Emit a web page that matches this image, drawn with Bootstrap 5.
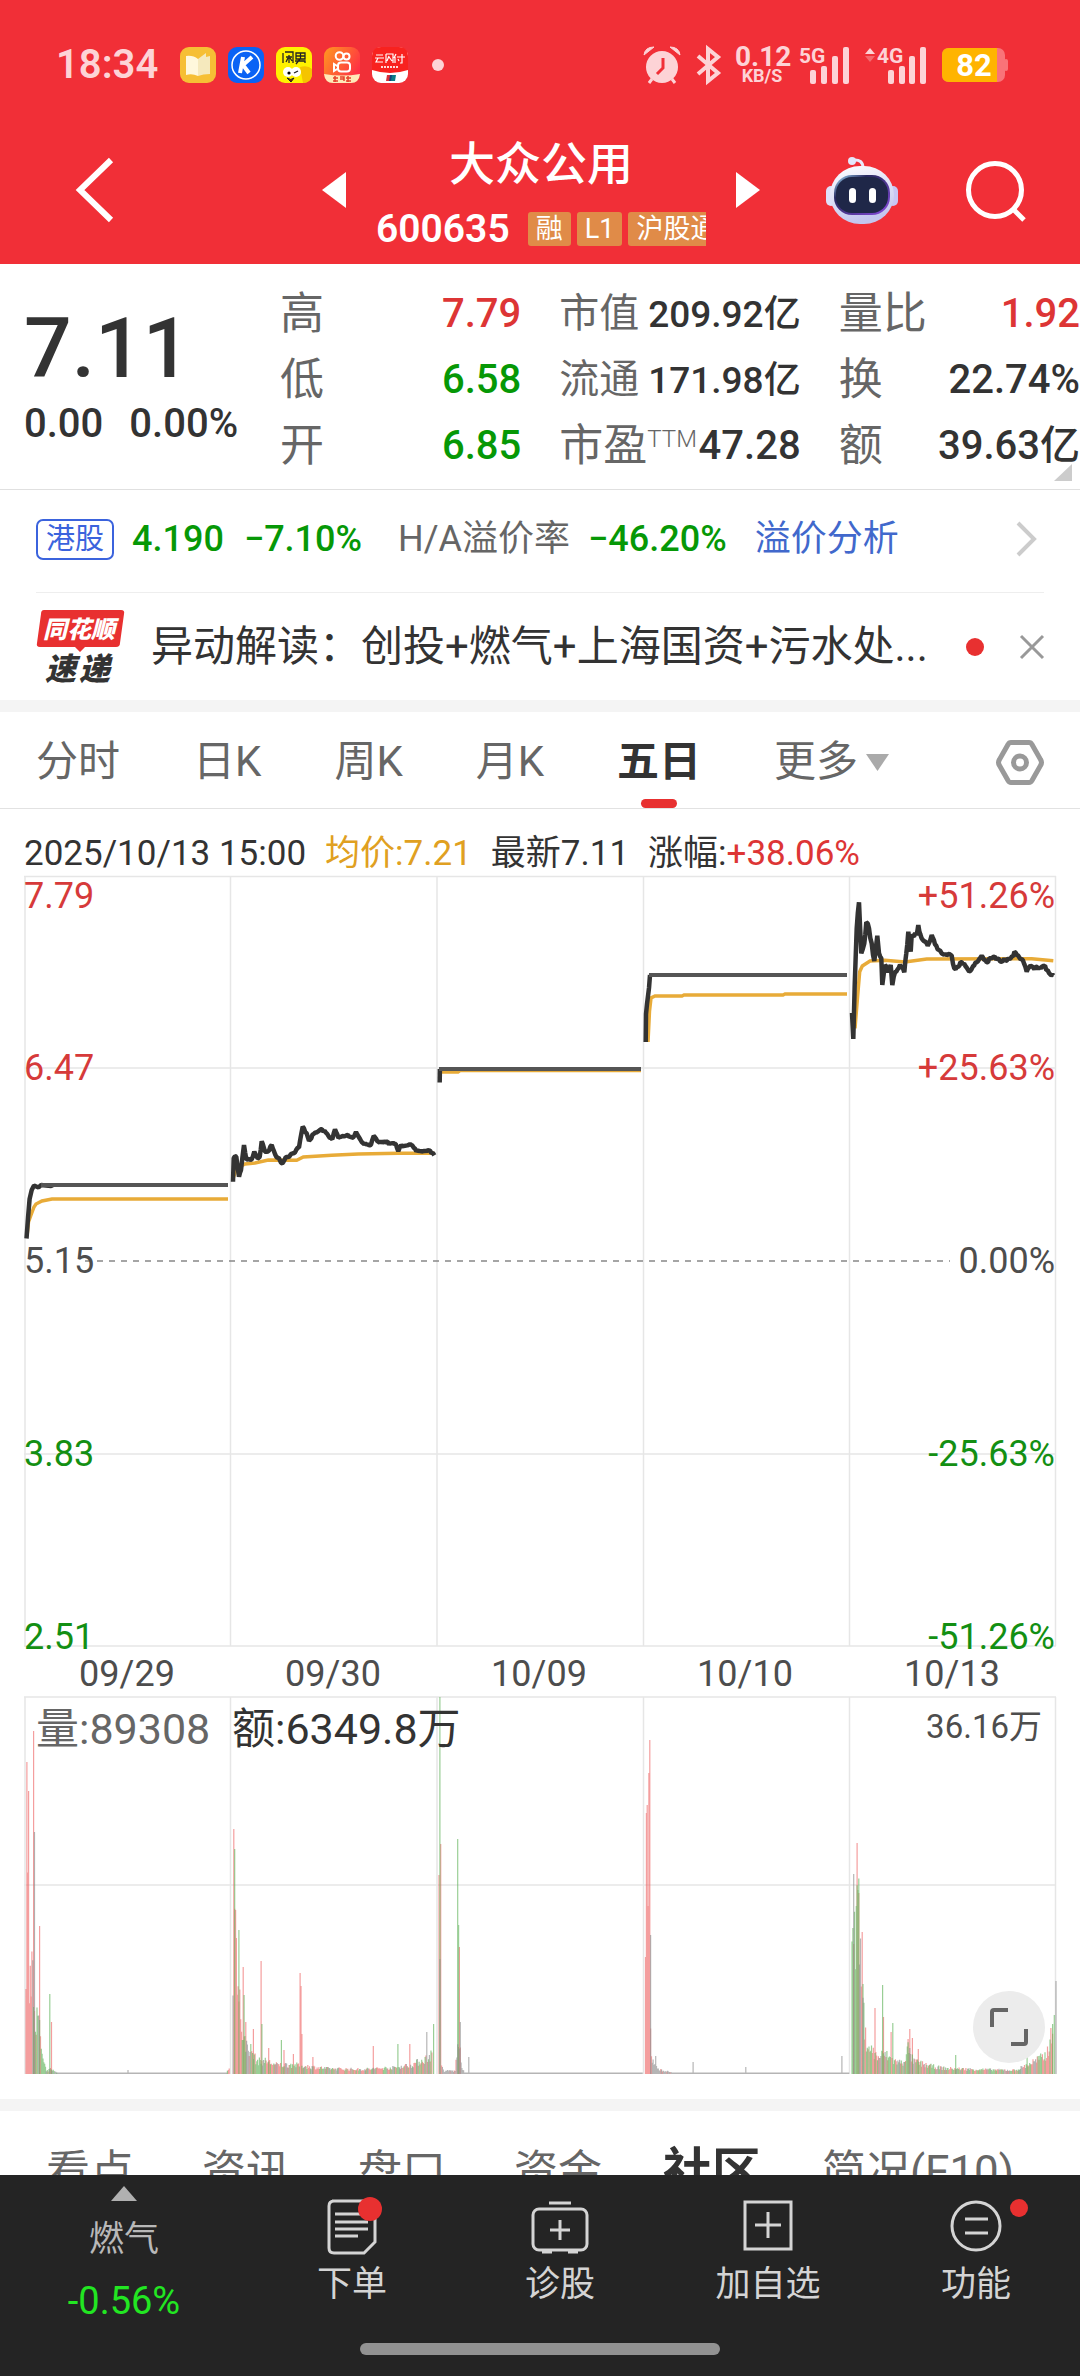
<!DOCTYPE html>
<html lang="zh-CN">
<head>
<meta charset="utf-8">
<meta name="viewport" content="width=device-width, initial-scale=1">
<title>大众公用 600635</title>
<link rel="stylesheet" href="https://cdn.jsdelivr.net/npm/bootstrap@5.3.0/dist/css/bootstrap.min.css">
<script src="https://cdn.jsdelivr.net/npm/bootstrap@5.3.0/dist/js/bootstrap.bundle.min.js"></script>
<style>
  :root { --up: #dd3535; --down: #069806; --brand: #f12f37; --ink: #333; --soft: #666; --pale: #fdd3d6; }
  body { font-family: Roboto, "Noto Sans CJK SC", sans-serif; color: var(--ink); background: #fff; line-height: 1; overflow-x: hidden; }
  a { text-decoration: none; color: inherit; }
  button { border: 0; background: none; padding: 0; color: inherit; line-height: 1; }
  svg { display: block; flex: none; overflow: visible; }
  .up { color: var(--up); } .down { color: var(--down); } .soft { color: var(--soft); }

  .top-area { background: var(--brand); color: #fff; }
  .status { height: 130px; padding: 0 72px 0 56px; color: var(--pale); }
  .clock { font-size: 40px; font-weight: 600; width: 124px; }
  .apps { gap: 12px; }
  .signals { gap: 14px; }
  .rate { font-size: 28px; line-height: 22px; font-weight: 700; width: 54px; }
  .rate-unit { font-size: 18px; line-height: 16px; font-weight: 700; }
  .title-bar { padding: 0 54px 14px 76px; height: 134px; }
  .switcher { gap: 30px; }
  .stock-name { font-size: 46px; line-height: 68px; font-weight: 500; }
  .stock-col { width: 330px; height: 120px; overflow: hidden; }
  .code-row { margin-top: 13px; gap: 6px; }
  .code { font-size: 39px; line-height: 36px; font-weight: 600; margin-right: 12px; }
  .tag { background: #e08b48; font-size: 27px; line-height: 34px; padding: 0 8px; border-radius: 3px; white-space: nowrap; }
  .tools { gap: 68px; margin-left: 66px; }

  .quote { padding: 17px 0 10px 24px; border-bottom: 1px solid #e0e0e0; position: relative; }
  .price-col { width: 256px; padding-top: 20px; }
  .price { font-size: 84px; line-height: 96px; font-weight: 500; }
  .change { font-size: 40px; line-height: 54px; gap: 26px; font-weight: 500; }
  .facts { flex: 1; gap: 38px; }
  .fact { height: 66px; font-size: 44px; white-space: nowrap; }
  .fact dt { font-weight: 400; color: var(--soft); }
  .fact dd { font-size: 40px; font-weight: 500; margin: 0; }
  .fact.tight dt { font-size: 40px; } .fact.tight dd { font-size: 37px; }
  .ttm { font-size: 24px; top: -14px; font-weight: 300; }
  .fold { position: absolute; right: 8px; bottom: 8px; }

  .hk { height: 102px; padding: 0 44px 4px 36px; font-size: 36px; }
  .hk-tag { font-size: 29px; line-height: 37px; border: 2px solid #3b63dd; color: #3b63dd; border-radius: 7px; padding: 0 8px; margin-right: 18px; }
  .hk b { font-weight: 500; }
  .hk-gap { margin-left: 36px; }
  .hk-lab { margin-right: 18px; }
  .link-blue { color: #4168cc; margin-left: 28px; }
  .news { margin: 0 36px; border-top: 1px solid #eee; height: 108px; }
  .flash { width: 89px; margin-right: 26px; }
  .news-text { font-size: 42px; line-height: 60px; }
  .news button { margin-left: 36px; flex: none; }
  .dot { display: block; flex: none; width: 18px; height: 18px; border-radius: 50%; background: #e83030; }
  .band { height: 12px; background: #f4f4f4; }

  .periods { height: 97px; padding: 4px 36px 0; gap: 73px; border-bottom: 1px solid #e2e2e2; font-size: 42px; color: var(--soft); }
  .periods a { position: relative; line-height: 92px; white-space: nowrap; }
  .periods .on { color: var(--ink); font-weight: 700; }
  .periods .on::after { content: ""; position: absolute; left: 24px; right: 24px; bottom: 0; height: 9px; border-radius: 5px; background: #e83030; }
  .readout { padding: 24px 24px 0; font-size: 35px; line-height: 41px; gap: 19px; }
  .avg { color: #e0a021; }

  .chart-box { margin-bottom: 23px; }
  .chart-box svg.plot { width: 100%; height: auto; }
  .plot text { font-family: Roboto, "Noto Sans CJK SC", sans-serif; font-size: 36px; }
  .plot .vol-text { font-size: 43px; }
  .plot .vol-max { font-size: 33px; }
  .expand { position: absolute; right: 35px; bottom: 13px; width: 72px; height: 72px; border-radius: 50%; background: #ececec; }

  .sections { padding: 28px 12px 0; font-size: 44px; line-height: 66px; color: var(--soft); overflow: hidden; }
  .sections a { padding: 0 34px; white-space: nowrap; }
  .sections .on { font-size: 49px; font-weight: 700; color: var(--ink); padding: 0 27px; }

  .dock { background: #242424; color: #d4d4d4; height: 201px; font-size: 35px; }
  .dock a { flex: 1; }
  .dock .sector { flex: 0 0 248px; color: #b8b8b8; padding-top: 11px; line-height: 44px; }
  .sector-name { margin-top: 17px; }
  .sector-rate { margin-top: 17px; color: #22e622; font-size: 38px; }
  .dock-icon { height: 52px; margin-top: 24px; position: relative; }
  .dock-label { line-height: 44px; margin-top: 12px; }
  .alert-dot { position: absolute; width: 24px; height: 24px; border-radius: 50%; background: #e83030; top: -2px; right: -5px; }
  .alert-dot.far { width: 18px; height: 18px; top: 0; right: -26px; }
  .home-bar { position: absolute; left: 33.33%; right: 33.33%; bottom: 21px; height: 12px; border-radius: 6px; background: #929292; }
</style>
</head>
<body>
<header class="top-area">
  <div class="status d-flex align-items-center">
    <span class="clock">18:34</span>
    <div class="apps d-flex">
      <svg width="36" height="36" viewBox="0 0 36 36"><rect width="36" height="36" rx="9" fill="#f6bf35"/><path d="M6 9q7-1 12 3v17q-6-3-12-1z" fill="#fff8dc"/><path d="M18 12l8-6v4l4-1v18q-7 0-12 2z" fill="#f5e9bd"/></svg>
      <svg width="36" height="36" viewBox="0 0 36 36"><rect width="36" height="36" rx="9" fill="#0a62f5"/><circle cx="18" cy="18" r="14" fill="none" stroke="#fff" stroke-width="1.5"/><path d="M15 10l-3 16M24 10l-9 8 6 8" fill="none" stroke="#fff" stroke-width="4"/></svg>
      <svg width="36" height="36" viewBox="0 0 36 36"><rect width="36" height="36" rx="9" fill="#fff100"/><path d="M24 20q8-2 12 2v6q-1 8-9 8z" fill="#f5c400"/><path d="M7 6v10M9 5h8v11M13 8v8M10 10h6M12 11l-2 4M14 11l2 3M20 6h9v6h-9zM20 9h9M24.500 6v6M19 14h10v2M24 12l-4 5" stroke="#222" stroke-width="1.300" fill="none"/><circle cx="12" cy="25" r="5" fill="#fff"/><circle cx="20" cy="25" r="5" fill="#fff"/><circle cx="13" cy="26" r="1.600"/><path d="M18 26l4-2" stroke="#222" stroke-width="1.300"/><path d="M11 31q4 3 7 0l-3 4z" stroke="#222" fill="#711" stroke-width="1"/></svg>
      <svg width="36" height="36" viewBox="0 0 36 36"><defs><linearGradient id="ks" x2="1" y2=".6"><stop stop-color="#ff9a1f"/><stop offset="1" stop-color="#ff2f45"/></linearGradient></defs><rect width="36" height="36" rx="9" fill="url(#ks)"/><g fill="none" stroke="#fff" stroke-width="2"><circle cx="15.500" cy="9" r="3.800"/><circle cx="22.500" cy="9.500" r="3"/><rect x="14" y="15.500" width="12" height="9" rx="3"/><path d="M10 17v7l4-2.500v-2z"/></g><path d="M0 27q18 3 36 0-1 9-9 9H9q-8 0-9-9z" fill="#ffe9b8"/><path d="M9 34h5M9 31h5M11 29v6M16 30h4v4M16 32h4M22 31h5M22 34h5M24 29v6" stroke="#e6402a" stroke-width="1.500" fill="none"/></svg>
      <svg width="36" height="36" viewBox="0 0 36 36"><rect width="36" height="36" rx="9" fill="#fff"/><path d="M0 23V9q0-9 9-9h18q9 0 9 9v14q-18 6-36 0z" fill="#f8221f"/><path d="M4 8h7M3 11h9M6 11l-2 4h7M14 7v9M14 7h7v9M17 9l-2 5M17 10l3 4M24 7l-2 4M23 10v6M25 10h8M30 7v9h-2M26 12l1 2" stroke="#fff" stroke-width="1.200" fill="none"/><path d="M9 20h18" stroke="#ffd9d9" stroke-width="2" stroke-dasharray="2 1"/><path d="M15 28h4l-1 6h-4z" fill="#d8303a"/><path d="M18 28h3l-1 6h-3z" fill="#14407a"/><path d="M20 28h4l-1 6h-4z" fill="#0b7c86"/></svg>
    </div>
    <svg class="ms-4" width="12" height="12" viewBox="0 0 12 12"><circle cx="6" cy="6" r="6" fill="#fdd3d6"/></svg>
    <div class="signals d-flex align-items-center ms-auto">
      <svg width="38" height="38" viewBox="0 0 38 38" fill="#fdd3d6"><circle cx="19" cy="21" r="16"/><path d="M1 9q1-8 10-8zM37 9q-1-8-10-8z" stroke="#fdd3d6" stroke-width="1"/><path d="M9 33l-3 4M29 33l3 4" stroke="#fdd3d6" stroke-width="3"/><path d="M20 12v10l-6 6" fill="none" stroke="#f12f37" stroke-width="3"/></svg>
      <svg width="26" height="38" viewBox="0 0 26 38"><path d="M3 10l20 17-10 8V3l10 8L3 28" fill="none" stroke="#fdd3d6" stroke-width="4"/></svg>
      <div class="rate text-center">0.12<div class="rate-unit">KB/S</div></div>
      <svg width="48" height="37" viewBox="0 0 48 37" fill="#fdd3d6"><text x="-4" y="16" font-size="21" font-weight="700">5G</text><rect x="7" y="23" width="6" height="14" rx="2"/><rect x="18" y="19" width="6" height="18" rx="2"/><rect x="29" y="9" width="6" height="28" rx="2"/><rect x="40" y="0" width="6" height="37" rx="2"/></svg>
      <svg width="63" height="37" viewBox="0 0 63 37" fill="#fdd3d6"><path d="M0 7l5-6 5 6z"/><path d="M0 9l5 6 5-6z" opacity=".35"/><text x="12" y="16" font-size="21" font-weight="700">4G</text><rect x="23" y="23" width="6" height="14" rx="2"/><rect x="34" y="19" width="6" height="18" rx="2"/><rect x="44" y="9" width="6" height="28" rx="2"/><rect x="55" y="0" width="6" height="37" rx="2"/></svg>
      <svg width="66" height="34" viewBox="0 0 66 34"><rect width="63" height="34" rx="7" fill="#f97378"/><rect x="62" y="11" width="4" height="12" rx="2" fill="#f97378"/><path d="M7 0h48v34H7q-7 0-7-7V7q0-7 7-7z" fill="#ffb400"/><text x="32" y="28" text-anchor="middle" font-size="31" font-weight="700" fill="#fff">82</text></svg>
    </div>
  </div>
  <div class="title-bar d-flex align-items-center">
    <button aria-label="返回"><svg width="37" height="66" viewBox="0 0 37 66"><path d="M35 3L4 33l31 30" fill="none" stroke="#fff" stroke-width="6"/></svg></button>
    <div class="switcher d-flex align-items-center ms-auto">
      <button aria-label="上一只"><svg width="24" height="36" viewBox="0 0 24 36"><path d="M24 0v36L0 18z" fill="#fff"/></svg></button>
      <div class="stock-col">
        <div class="stock-name text-center">大众公用</div>
        <div class="code-row d-flex align-items-center"><span class="code">600635</span><span class="tag">融</span><span class="tag">L1</span><span class="tag">沪股通</span></div>
      </div>
      <button aria-label="下一只"><svg width="24" height="36" viewBox="0 0 24 36"><path d="M0 0v36l24-18z" fill="#fff"/></svg></button>
    </div>
    <div class="tools d-flex align-items-center">
      <button aria-label="智能助手"><svg width="72" height="68" viewBox="0 0 72 68"><defs><linearGradient id="hd" x2=".3" y2="1"><stop stop-color="#fff"/><stop offset="1" stop-color="#c3c6ee"/></linearGradient><linearGradient id="vs" x2="1" y2="1"><stop stop-color="#a9e4ff"/><stop offset=".3" stop-color="#27285e"/><stop offset="1" stop-color="#8a4be0"/></linearGradient></defs><path d="M27 4q10-1 10 8" fill="none" stroke="#e9e9fb" stroke-width="3"/><circle cx="26" cy="5" r="4" fill="#e4e6fa"/><rect x="0" y="30" width="10" height="20" rx="5" fill="#dfe0fa"/><rect x="62" y="30" width="10" height="20" rx="5" fill="#c8c6f4"/><rect x="4" y="10" width="64" height="58" rx="30" fill="url(#hd)"/><rect x="8" y="19" width="56" height="40" rx="18" fill="url(#vs)"/><rect x="10" y="21" width="52" height="36" rx="16" fill="#1f2748"/><rect x="23" y="32" width="7" height="15" rx="3.500" fill="#fff"/><rect x="43" y="32" width="7" height="15" rx="3.500" fill="#fff"/></svg></button>
      <button aria-label="搜索"><svg width="60" height="60" viewBox="0 0 60 60" fill="none" stroke="#fff" stroke-width="5"><circle cx="29" cy="30" r="26.500"/><path d="M47 49l11 11"/></svg></button>
    </div>
  </div>
</header>

<main>
  <section class="quote d-flex">
    <div class="price-col">
      <div class="price">7.11</div>
      <div class="change d-flex"><span>0.00</span><span>0.00%</span></div>
    </div>
    <div class="facts d-flex">
      <dl class="m-0 flex-fill w-100">
        <div class="fact d-flex align-items-center justify-content-between"><dt>高</dt><dd class="up">7.79</dd></div>
        <div class="fact d-flex align-items-center justify-content-between"><dt>低</dt><dd class="down">6.58</dd></div>
        <div class="fact d-flex align-items-center justify-content-between"><dt>开</dt><dd class="down">6.85</dd></div>
      </dl>
      <dl class="m-0 flex-fill w-100">
        <div class="fact tight d-flex align-items-center justify-content-between"><dt>市值</dt><dd>209.92亿</dd></div>
        <div class="fact tight d-flex align-items-center justify-content-between"><dt>流通</dt><dd>171.98亿</dd></div>
        <div class="fact d-flex align-items-center justify-content-between"><dt>市盈<span class="ttm position-relative">TTM</span></dt><dd>47.28</dd></div>
      </dl>
      <dl class="m-0 flex-fill w-100">
        <div class="fact d-flex align-items-center justify-content-between"><dt>量比</dt><dd class="up">1.92</dd></div>
        <div class="fact d-flex align-items-center justify-content-between"><dt>换</dt><dd>22.74%</dd></div>
        <div class="fact d-flex align-items-center justify-content-between"><dt>额</dt><dd>39.63亿</dd></div>
      </dl>
    </div>
    <svg class="fold" width="18" height="17" viewBox="0 0 18 17"><path d="M18 0v17H0z" fill="#ccc"/></svg>
  </section>

  <section class="hk d-flex align-items-center">
    <span class="hk-tag">港股</span>
    <b class="down me-3 pe-1">4.190</b>
    <b class="down">−7.10%</b>
    <span class="soft hk-gap hk-lab">H/A溢价率</span>
    <b class="down">−46.20%</b>
    <a href="#" class="link-blue">溢价分析</a>
    <svg class="ms-auto" width="20" height="36" viewBox="0 0 20 36"><path d="M2 2l16 16L2 34" fill="none" stroke="#ccc" stroke-width="4"/></svg>
  </section>

  <section class="news d-flex align-items-center">
    <svg class="flash" height="76" viewBox="0 0 89 76"><path d="M8 1h77q4 0 3 4l-4 29q0 4-4 4H49l-5 5-5-5H4q-4 0-3-4L5 5q0-4 3-4z" fill="#e83030"/><g font-weight="900" font-style="italic"><text x="43" y="29" text-anchor="middle" font-size="24" fill="#fff">同花顺</text><text x="9" y="71" font-size="31" fill="#333">速</text><text x="43" y="71" font-size="31" fill="#333">递</text></g></svg>
    <a href="#" class="news-text text-truncate">异动解读：创投+燃气+上海国资+污水处...</a>
    <span class="dot ms-auto"></span>
    <button aria-label="关闭"><svg width="24" height="24" viewBox="0 0 24 24"><path d="M1 1l22 22M23 1L1 23" stroke="#999" stroke-width="3"/></svg></button>
  </section>
  <div class="band"></div>

  <nav class="periods d-flex align-items-center">
    <a href="#">分时</a><a href="#">日K</a><a href="#">周K</a><a href="#">月K</a><a href="#" class="on">五日</a>
    <a href="#" class="d-flex align-items-center gap-2">更多<svg width="23" height="18" viewBox="0 0 23 18"><path d="M0 1h23L11.500 18z" fill="#aaa"/></svg></a>
    <button aria-label="设置" class="ms-auto"><svg width="48" height="45" viewBox="0 0 48 45" fill="none" stroke="#999" stroke-width="5"><path d="M15 2.500h18q2 0 3 2l8.500 15q2 3 0 6l-8.500 15q-1 2-3 2H15q-2 0-3-2l-8.500-15q-2-3 0-6l8.500-15q1-2 3-2z"/><circle cx="24" cy="22.500" r="6.500"/></svg></button>
  </nav>

  <div class="readout d-flex">
    <span>2025/10/13 15:00</span><span class="avg">均价:7.21</span><span>最新7.11</span><span>涨幅:<span class="up">+38.06%</span></span>
  </div>

  <div class="chart-box position-relative">
    <svg class="plot" viewBox="0 874 1080 1202" role="img" aria-label="五日分时走势">
      <g stroke="#e6e6e6" stroke-width="1.500" fill="none">
        <path d="M24 876.500H1056M24 1068H1056M24 1454H1056M24 1646H1056M24 1697H1056M24 1885H1056"/>
        <path d="M25 876V1646M230.500 876V1646M437 876V1646M643.500 876V1646M849.500 876V1646M1055.500 876V1646"/>
        <path d="M25 1697V2074M230.500 1697V2074M437 1697V2074M643.500 1697V2074M849.500 1697V2074M1055.500 1697V2074"/>
      </g>
      <path d="M85 1261H950" stroke="#888" stroke-width="1.500" stroke-dasharray="6 6"/>
      <g id="volume" fill="none" stroke-width="1.200"></g>
      <g id="average" fill="none" stroke="#e8ab38" stroke-width="3.500"></g>
      <g id="price" fill="none" stroke="#333" stroke-width="4.500" stroke-linejoin="bevel"></g>
      <g id="limit" fill="none" stroke="#555" stroke-width="4"></g>
      <g fill="#d63a3a"><text x="24" y="908">7.79</text><text x="24" y="1080">6.47</text></g>
      <text x="24" y="1273" fill="#4d4d4d">5.15</text>
      <g fill="#138f13"><text x="24" y="1466">3.83</text><text x="24" y="1649">2.51</text></g>
      <g text-anchor="end">
        <text x="1055" y="908" fill="#d63a3a">+51.26%</text><text x="1055" y="1080" fill="#d63a3a">+25.63%</text>
        <text x="1055" y="1273" fill="#4d4d4d">0.00%</text>
        <text x="1055" y="1466" fill="#138f13">-25.63%</text><text x="1055" y="1649" fill="#138f13">-51.26%</text>
        <text x="1042" y="1738" fill="#4d4d4d" class="vol-max">36.16万</text>
      </g>
      <g text-anchor="middle" fill="#4d4d4d">
        <text x="127" y="1686">09/29</text><text x="333" y="1686">09/30</text><text x="539" y="1686">10/09</text><text x="745" y="1686">10/10</text><text x="952" y="1686">10/13</text>
      </g>
      <text x="36" y="1744" fill="#666" class="vol-text">量:89308</text>
      <text x="232" y="1744" fill="#333" class="vol-text">额:6349.8万</text>
    </svg>
    <button class="expand d-flex align-items-center justify-content-center" aria-label="全屏"><svg width="38" height="38" viewBox="0 0 38 38" fill="none" stroke="#666" stroke-width="4"><path d="M2 19V4q0-2 2-2h14M36 21v13q0 2-2 2H21"/></svg></button>
  </div>
  <div class="band"></div>

  <nav class="sections d-flex">
    <a href="#">看点</a><a href="#">资讯</a><a href="#">盘口</a><a href="#">资金</a><a href="#" class="on">社区</a><a href="#">简况(F10)</a>
  </nav>
</main>

<nav class="dock fixed-bottom d-flex text-center">
  <a href="#" class="sector">
    <svg class="mx-auto" width="26" height="15" viewBox="0 0 26 15"><path d="M13 0l13 15H0z" fill="#b0b0b0"/></svg>
    <div class="sector-name">燃气</div>
    <div class="sector-rate">-0.56%</div>
  </a>
  <a href="#" class="d-flex flex-column align-items-center"><div class="dock-icon"><svg width="50" height="56" viewBox="0 0 50 56" fill="none" stroke="#d4d4d4" stroke-width="3"><path d="M5 2h38q5 0 5 5v36L37 54H7q-5 0-5-5V7q0-5 5-5M8 15h26M8 23h33M8 30h33M8 37h23"/></svg><span class="alert-dot"></span></div><div class="dock-label">下单</div></a>
  <a href="#" class="d-flex flex-column align-items-center"><div class="dock-icon"><svg width="58" height="56" viewBox="0 0 58 56" fill="none" stroke="#d4d4d4" stroke-width="3"><rect x="2" y="10" width="54" height="41" rx="6"/><path d="M18 4h22M11 53h10M37 53h10M29 21v20M19 31h20"/></svg></div><div class="dock-label">诊股</div></a>
  <a href="#" class="d-flex flex-column align-items-center"><div class="dock-icon"><svg width="50" height="52" viewBox="0 0 50 52" fill="none" stroke="#d4d4d4" stroke-width="3"><path d="M2 3h46v47H2zM25 13v26M12 26h26"/></svg></div><div class="dock-label">加自选</div></a>
  <a href="#" class="d-flex flex-column align-items-center"><div class="dock-icon"><svg width="52" height="52" viewBox="0 0 52 52" fill="none" stroke="#d4d4d4" stroke-width="3"><circle cx="26" cy="27" r="24"/><path d="M15 20h23M15 34h23"/></svg><span class="alert-dot far"></span></div><div class="dock-label">功能</div></a>
  <span class="home-bar"></span>
</nav>

<script>
  const NS = "http://www.w3.org/2000/svg";
  let seed = 7;
  const rnd = () => (seed = (seed * 16807) % 2147483647) / 2147483647;

  // Adds one polyline; `wobble` fills in minute-by-minute movement between the turning points.
  function trace(group, pts, wobble, ox = 0, oy = 0, k = 1) {
    const abs = pts.map(([x, y]) => [ox + x * k, oy + y * k]);
    const out = [abs[0]];
    for (let i = 1; i < abs.length; i++) {
      const [x0, y0] = abs[i - 1], [x1, y1] = abs[i];
      const n = wobble ? Math.max(1, Math.round((x1 - x0) / 1.3)) : 1;
      for (let j = 1; j <= n; j++) {
        const t = j / n;
        out.push([x0 + (x1 - x0) * t, y0 + (y1 - y0) * t + (j < n ? (rnd() - .5) * wobble : 0)]);
      }
    }
    const p = document.createElementNS(NS, "polyline");
    p.setAttribute("points", out.map(q => q[0].toFixed(1) + "," + q[1].toFixed(1)).join(" "));
    document.getElementById(group).appendChild(p);
  }

  trace("average", [[27,1236],[28.500,1222],[31,1215],[34,1207],[36,1204],[42,1201],[52,1199],[228,1199]], 0);
  trace("price", [[26.500,1238.500],[28,1218],[29.600,1199],[31.700,1190],[34,1185.500],[38.500,1187.500],[41,1185],[51,1186],[53,1185]], 0);
  trace("limit", [[41,1185],[228,1185]], 0);
  trace("average", [[24,205],[35,175],[60,162],[90,159],[130,150],[215,151],[235,141],[320,136],[400,132],[520,130],[628,130]], 0, 225, 1110, 1/3);
  trace("price", [[24,215],[26,145],[34,140],[42,200],[48,180],[57,105],[64,148],[80,148],[88,125],[98,145],[104,140],[110,94],[120,125],[132,122],[140,105],[150,132],[172,160],[182,142],[205,130],[222,112],[233,50],[245,70],[252,92],[266,72],[291,58],[322,88],[330,58],[340,83],[365,76],[385,82],[393,66],[410,96],[432,106],[438,104],[446,78],[460,95],[512,102],[520,124],[528,106],[555,102],[574,124],[615,122],[628,136]], 2.6, 225, 1110, 1/3);
  trace("average", [[440,1072],[458,1072],[460,1070.500],[641,1070.500]], 0);
  trace("price", [[439.700,1082.500],[439.900,1069]], 0);
  trace("limit", [[439,1069],[641,1069]], 0);
  trace("average", [[648,1042],[649.500,1011],[651,998],[655,996],[682,996],[684,995],[783,995],[785,994],[847,994]], 0);
  trace("price", [[645.700,1042],[646,1014],[647,1004],[649,988],[650,975]], 0);
  trace("limit", [[649,975],[847,975]], 0);
  trace("average", [[30,430],[38,330],[44,260],[52,243],[75,228],[120,226],[180,231],[245,222],[560,221],[625,227]], 0, 845, 885, 1/3);
  trace("price", [[21,384],[25,462],[29,300],[35,130],[42,52],[49,205],[58,175],[64,112],[72,130],[88,228],[97,152],[102,205],[109,220],[112,300],[120,240],[130,262],[137,240],[142,300],[150,262],[165,240],[178,262],[184,205],[190,140],[197,200],[200,150],[214,150],[220,120],[226,148],[248,182],[260,150],[270,178],[290,205],[320,212],[328,250],[350,232],[376,258],[395,232],[410,212],[425,232],[445,216],[470,230],[490,220],[512,203],[530,222],[545,260],[560,244],[580,252],[600,242],[612,264],[626,272]], 4, 845, 885, 1/3);

  // Volume: `env` is [minute, height] turning points, `spikes` are single tall bars [minute, height, colour].
  const R = "#ee6a6a", G = "#62b45c", N = "#8d8d8d";
  const days = [
    { x: 26, open: .85, mix: .35, env: [[0,100],[1,310],[2,170],[3,245],[4,105],[6,120],[8,128],[10,80],[12,60],[16,50],[18,30],[20,15],[24,3],[30,6],[33,3],[40,1],[236,1],[239,8]],
      spikes: [[1,312,R],[2,173,R],[3,245,R],[9,343,R],[10,242,N],[16,148,R],[28,80,G],[30,52,R],[120,4,N]] },
    { x: 233, open: .6, mix: .5, env: [[0,80],[1,245],[3,164],[5,96],[9,70],[12,36],[20,28],[28,14],[40,14],[50,10],[70,10],[90,8],[110,6],[150,5],[190,7],[210,10],[230,18],[234,22]],
      spikes: [[1,245,R],[2,225,G],[3,164,R],[4,136,R],[7,144,G],[12,107,R],[13,79,G],[15,52,R],[24,45,R],[33,113,R],[34,50,G],[42,26,R],[57,34,G],[60,24,R],[71,20,R],[79,101,R],[80,88,R],[81,40,R],[94,17,R],[165,28,R],[194,30,G],[208,30,R],[228,42,N],[236,50,G]] },
    { x: 439, open: .6, mix: .2, env: [[0,200],[2,20],[4,6],[6,2],[10,4],[19,3],[20,20],[24,30],[27,8],[30,1],[239,1]],
      spikes: [[0,199,R],[1,377,G],[2,230,R],[22,235,G],[23,149,G],[24,127,R],[25,52,N],[35,17,N]] },
    { x: 645.5, open: 1, mix: .1, env: [[0,117],[1,260],[3,168],[5,117],[7,16],[10,12],[14,5],[30,2],[60,1],[239,1]],
      spikes: [[0,117,R],[1,261,R],[2,269,R],[3,168,R],[4,301,R],[5,334,R],[6,139,N],[12,18,N],[56,12,N],[118,7,N],[231,18,N]] },
    { x: 852, open: .5, mix: .48, env: [[0,122],[2,150],[4,135],[6,184],[9,155],[12,90],[16,40],[20,30],[30,18],[38,22],[50,14],[60,12],[66,28],[72,14],[90,9],[110,6],[150,5],[192,4],[202,8],[215,14],[228,20],[236,45]],
      spikes: [[1,146,G],[2,200,N],[5,168,G],[6,231,R],[7,184,G],[8,181,R],[12,142,R],[13,90,G],[27,66,R],[36,89,G],[37,57,R],[46,42,R],[48,51,G],[66,35,R],[68,45,R],[71,36,R],[78,25,R],[122,19,G],[206,24,G],[236,50,G],[238,59,G],[240,93,N]] }
  ];
  const strokes = { [R]: "", [G]: "", [N]: "" };
  const bar = (x, h, c) => { strokes[c] += "M" + x.toFixed(1) + " 2074v-" + h.toFixed(1); };
  days.forEach(d => {
    for (let m = 0; m < 240; m++) {
      const i = Math.max(1, d.env.findIndex(e => e[0] >= m));
      const a = d.env[i - 1], b = d.env[i];
      if (m > d.env[d.env.length - 1][0]) continue;
      const base = a[1] + (b[1] - a[1]) * (m - a[0]) / (b[0] - a[0]);
      const h = base < 2 ? 1.500 : base * (.6 + rnd() * .6);
      const r = rnd(), mix = m < 8 ? d.open : d.mix;
      bar(d.x + m * .85, h, base < 2 ? N : r < mix ? R : r < .85 ? (d.mix < .3 ? N : G) : N);
    }
    d.spikes.forEach(([m, h, c]) => bar(d.x + m * .85, h, c));
  });
  for (const c in strokes) {
    const p = document.createElementNS(NS, "path");
    p.setAttribute("d", strokes[c]);
    p.setAttribute("stroke", c);
    p.setAttribute("opacity", ".65");
    document.getElementById("volume").appendChild(p);
  }
</script>
</body>
</html>
